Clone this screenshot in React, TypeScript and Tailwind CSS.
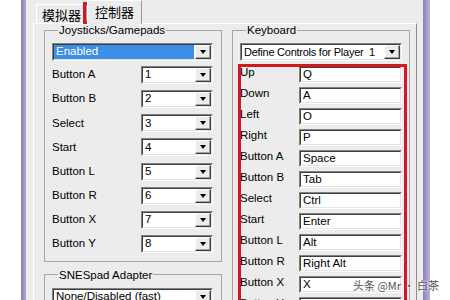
const sans = "font-['Liberation_Sans',Arial,sans-serif]";
const cjk = "font-['Noto_Sans_CJK_SC','Noto_Sans_CJK_JP',sans-serif]";

const joyRows = [
  ["Button A", "1"],
  ["Button B", "2"],
  ["Select", "3"],
  ["Start", "4"],
  ["Button L", "5"],
  ["Button R", "6"],
  ["Button X", "7"],
  ["Button Y", "8"],
];

const keyRows = [
  ["Up", "Q"],
  ["Down", "A"],
  ["Left", "O"],
  ["Right", "P"],
  ["Button A", "Space"],
  ["Button B", "Tab"],
  ["Select", "Ctrl"],
  ["Start", "Enter"],
  ["Button L", "Alt"],
  ["Button R", "Right Alt"],
  ["Button X", "X"],
  ["Button Y", "Z"],
];

function ArrowBtn() {
  return (
    <div className="flex h-full w-[16px] shrink-0 items-center justify-center border border-b-[#404040] border-l-white border-r-[#404040] border-t-white bg-[#ececec] shadow-[inset_-1px_-1px_0_#a0a0a0]">
      <div className="h-0 w-0 border-x-[3.5px] border-t-[4px] border-x-transparent border-t-black" />
    </div>
  );
}

function Combo({
  value,
  selected,
  className = "",
  textClass = "",
}: {
  value: string;
  selected?: boolean;
  className?: string;
  textClass?: string;
}) {
  return (
    <div className={`flex h-[18px] border border-b-white border-l-[#808080] border-r-white border-t-[#808080] bg-white ${className}`}>
      <div className="flex min-w-0 flex-1 border border-b-[#e4e4e4] border-l-[#404040] border-r-[#e4e4e4] border-t-[#404040]">
        <div
          className={`flex min-w-0 flex-1 items-center overflow-hidden whitespace-pre pl-[2px] leading-none ${textClass} ${
            selected ? "mr-[1px] bg-[#3d8ee6] text-white" : ""
          }`}
        >
          {value}
        </div>
        <ArrowBtn />
      </div>
    </div>
  );
}

function TextBox({ value }: { value: string }) {
  return (
    <div className="flex h-[17px] min-w-0 flex-1 border border-b-white border-l-[#808080] border-r-white border-t-[#808080] bg-white">
      <div className="flex flex-1 items-center border border-b-[#e4e4e4] border-l-[#404040] border-r-[#e4e4e4] border-t-[#404040] pl-[2px] leading-none">
        {value}
      </div>
    </div>
  );
}

function Group({ title, className = "", children }: { title: string; className?: string; children: React.ReactNode }) {
  return (
    <fieldset className={`min-w-0 border border-[#a6a6a6] pb-[8px] pt-[7px] ${className}`}>
      <legend className="ml-[6px] px-[1px] leading-[12px]">{title}</legend>
      {children}
    </fieldset>
  );
}

export default function App() {
  return (
    <div className={`relative flex h-[300px] w-[450px] overflow-hidden bg-white text-[11.5px] text-black ${sans}`}>
      <div className="w-[21px] shrink-0 bg-white" />
      <div className="w-[5px] shrink-0 bg-gradient-to-r from-[#8a7bb5] to-[#b3a7d6]" />

      <div className="flex w-[397px] shrink-0 flex-col bg-[#ececec] pl-[7px] pr-[6px]">
        {/* tabs */}
        <div className={`flex h-[25px] items-end pl-[3px] text-[13px] ${cjk}`}>
          <div className="flex h-[19px] items-center border-l border-r border-t border-l-white border-r-[#9a9a9a] border-t-white px-[5px] pt-[1px] leading-none">
            模拟器
          </div>
          <div className="relative z-10 -mb-px flex h-[24px] items-start border-l border-r border-t border-l-white border-r-[#9a9a9a] border-t-white bg-[#ececec] px-[7px] pt-[4px] leading-none">
            控制器
          </div>
        </div>

        {/* tab page */}
        <div className="flex flex-1 gap-[10px] border-l border-r border-t border-l-white border-r-[#8c8c8c] border-t-white pl-[10px] pr-[6px]">
          <div className="flex w-[178px] shrink-0 flex-col">
            <Group title="Joysticks/Gamepads" className="pl-[7px] pr-[8px]">
              <Combo value="Enabled" selected />
              <div className="mt-[5px] flex flex-col gap-[6.15px]">
                {joyRows.map(([label, v]) => (
                  <div key={label} className="flex h-[18px] items-center justify-between">
                    <span className="leading-none">{label}</span>
                    <Combo value={v} className="w-[72px]" />
                  </div>
                ))}
              </div>
            </Group>
            <Group title="SNESpad Adapter" className="mt-[7px] pl-[7px] pr-[8px]">
              <Combo value="None/Disabled (fast)" />
            </Group>
          </div>

          <Group title="Keyboard" className="w-[178px] shrink-0 px-[7px]">
            <Combo value="Define Controls for Player  1" textClass="text-[11px] tracking-[-0.25px]" />
            <div className="mt-[5px] flex flex-col gap-[4px]">
              {keyRows.map(([label, v]) => (
                <div key={label} className="flex h-[17px] items-center">
                  <span className="w-[59px] shrink-0 -translate-y-[2px] leading-none">{label}</span>
                  <TextBox value={v} />
                </div>
              ))}
            </div>
          </Group>
        </div>
      </div>

      <div className="w-[7px] shrink-0 bg-gradient-to-r from-[#8f80ba] to-[#bdb2dd]" />
      <div className="flex-1 bg-white" />

      {/* annotations */}
      <div className="absolute left-[83px] top-[2px] h-[22px] w-[54px] border-[3px] border-[#d11a1f]" />
      <div className="absolute left-[238px] top-[64px] h-[260px] w-[169px] border-[3px] border-[#d11a1f]" />
      <div
        className={`absolute left-[353px] top-[277px] whitespace-pre text-[11px] text-[#555] [text-shadow:0_0_2px_#fff,0_0_2px_#fff] ${cjk}`}
      >
        头条 @Mr · 白茶
      </div>
    </div>
  );
}
